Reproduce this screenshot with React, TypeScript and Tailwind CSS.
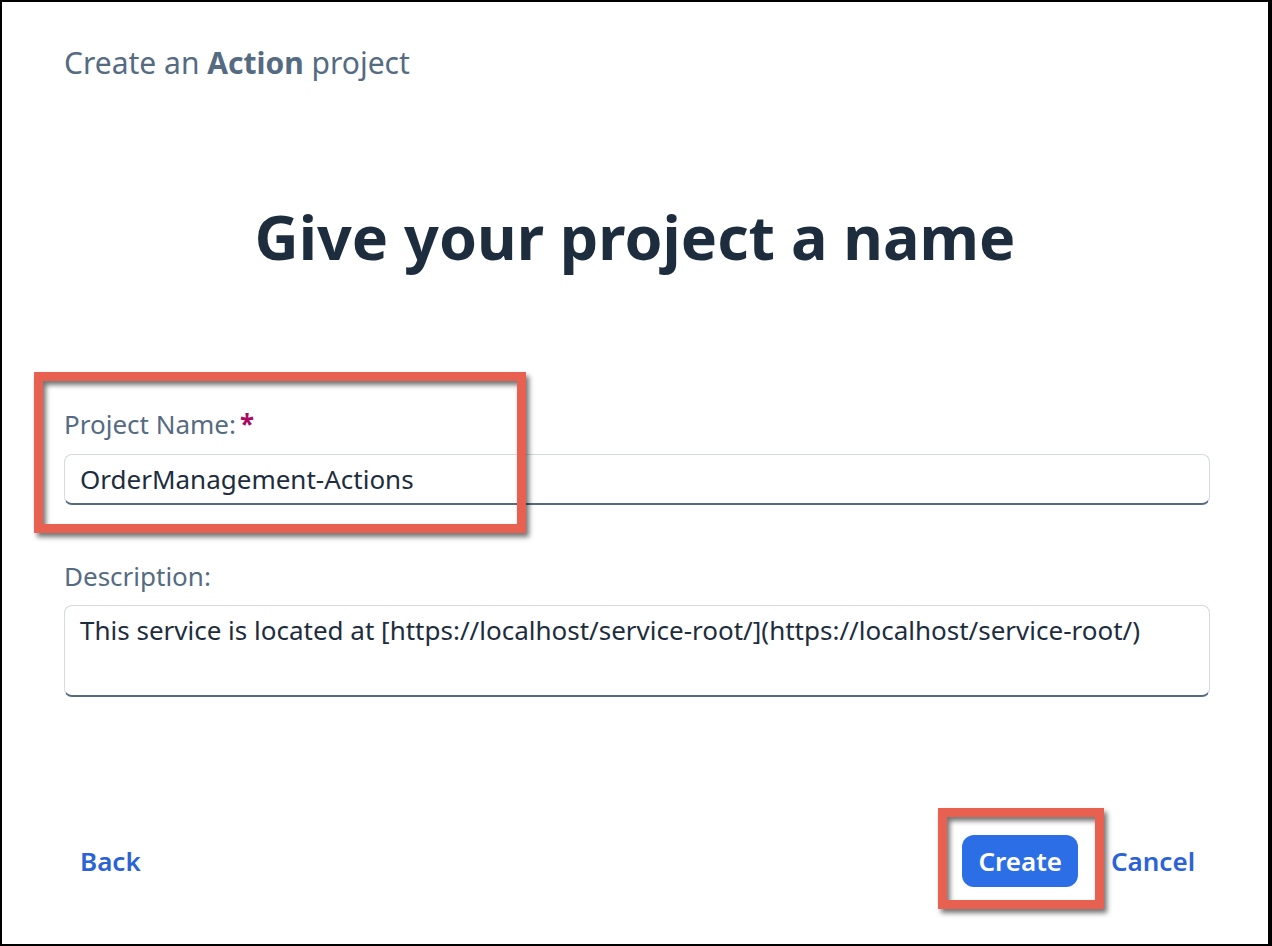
import React from 'react'

const font = { fontFamily: '"Noto Sans", "Open Sans", Arial, sans-serif' }

function Highlight({ className }: { className: string }) {
  // red annotation frame drawn over the form
  return (
    <div
      className={`pointer-events-none absolute border-[9px] border-[#e8604f] shadow-[3px_4px_5px_rgba(0,0,0,0.55),inset_3px_4px_5px_rgba(0,0,0,0.55)] ${className}`}
    />
  )
}

export default function App() {
  return (
    <div
      className="relative w-[1272px] h-[946px] bg-white border-t-2 border-l-2 border-r-4 border-b-2 border-black flex flex-col"
      style={font}
    >
      <div className="pl-[62px] pt-[42px] text-[30px] leading-[38px] text-[#556b82]">
        Create an <span className="font-bold">Action</span> project
      </div>

      <h1 className="mt-[115px] text-center text-[61px] leading-[80px] font-bold text-[#1d2d3e]">
        Give your project a name
      </h1>

      <div className="mt-[131px] pl-[62px] pr-[58px] flex flex-col">
        <label className="text-[26px] leading-[32px] text-[#556b82] flex items-center">
          Project Name:
          <span className="ml-[4px] text-[#aa0860] font-bold">*</span>
        </label>
        <div className="mt-[14px] h-[51px] rounded-[8px] border border-[#d5dadd] border-b-2 border-b-[#556b82] flex items-center px-[15px] text-[26px] text-[#1d2d3e]">
          OrderManagement-Actions
        </div>

        <label className="mt-[55px] text-[26px] leading-[32px] text-[#556b82]">Description:</label>
        <div className="mt-[13px] h-[92px] rounded-[8px] border border-[#d5dadd] border-b-2 border-b-[#556b82] px-[15px] pt-[7px] text-[26px] leading-[34px] text-[#1d2d3e]">
          This service is located at [https://localhost/service-root/](https://localhost/service-root/)
        </div>
      </div>

      <div className="mt-auto mb-[57px] pl-[78px] pr-[73px] flex items-center">
        <button className="text-[26px] font-semibold text-[#2b62d8]">Back</button>
        <div className="ml-auto flex items-center gap-[33px]">
          <button className="h-[52px] px-[16px] rounded-[12px] bg-[#2c6ee5] text-white text-[26px] font-semibold">
            Create
          </button>
          <button className="text-[26px] font-semibold text-[#2b62d8]">Cancel</button>
        </div>
      </div>

      <Highlight className="left-[32px] top-[370px] w-[492px] h-[161px]" />
      <Highlight className="left-[936px] top-[806px] w-[166px] h-[101px]" />
    </div>
  )
}
